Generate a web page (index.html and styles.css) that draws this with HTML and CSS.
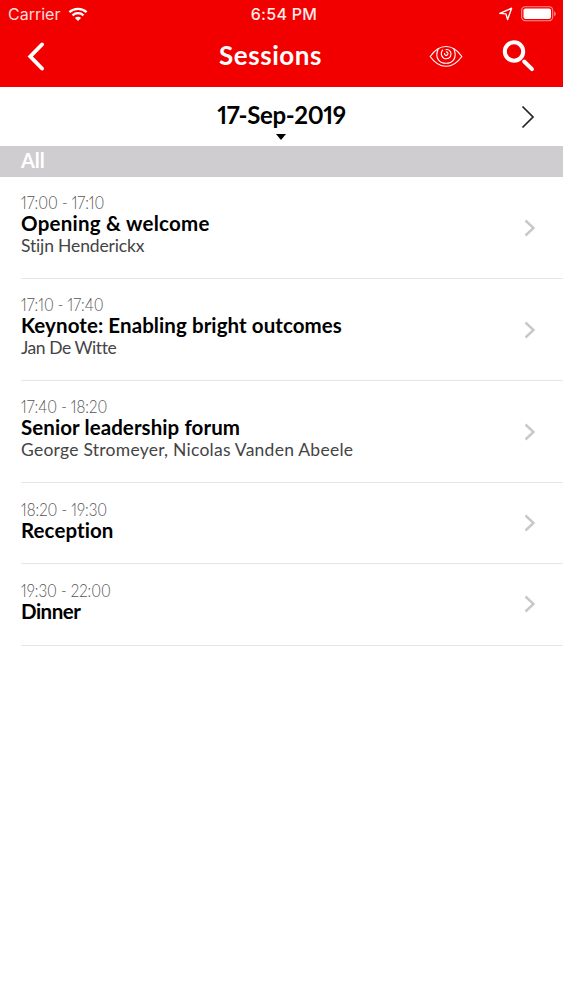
FILE: index.html
```html
<!DOCTYPE html>
<html lang="en">
<head>
  <meta charset="UTF-8" />
  <meta name="viewport" content="width=device-width, initial-scale=1.0" />
  <title>Sessions</title>
  <link rel="stylesheet" href="styles.css">
</head>
<body>
  <header class="header">
    <div class="status-bar">
      <div class="carrier">
        <span>Carrier</span>
        <svg class="wifi" width="20" height="15" viewBox="0 0 20 15" fill="none" stroke="#fff" stroke-width="2.3">
          <path d="M1.4 5.2C6.2.7 13.8.7 18.6 5.2M4.5 8.3c3.1-2.9 7.9-2.9 11 0" />
          <path d="M10 14l-3.1-3.1c1.8-1.5 4.4-1.5 6.2 0z" fill="#fff" stroke="none" />
        </svg>
      </div>
      <span class="clock">6:54 PM</span>
      <div class="indicators">
        <svg width="14" height="14" viewBox="0 0 14 14" fill="none" stroke="#fff" stroke-width="1.4" stroke-linejoin="round">
          <path d="M.8 6.4L12.6 1.2 8.6 12.6 6.9 6.9z" />
        </svg>
        <svg width="35" height="16" viewBox="0 0 35 16">
          <rect x=".7" y=".7" width="31" height="14" rx="3.6" fill="none" stroke="#ff8f8f" stroke-width="1.1" />
          <rect x="2.5" y="2.5" width="27.5" height="10.4" rx="1.8" fill="#fff" />
          <path d="M33.2 5.2c2 .8 2 4.2 0 5z" fill="#ff8f8f" />
        </svg>
      </div>
    </div>
    <div class="nav-bar">
      <svg class="back" width="20" height="30" viewBox="0 0 20 30" fill="none" stroke="#fff" stroke-width="3.9" stroke-linecap="round">
        <path d="M17 3.500L5.300 15.500 17 27.500" />
      </svg>
      <h1>Sessions</h1>
      <div class="actions">
        <svg width="34" height="24" viewBox="0 0 34 24" fill="none" stroke="#fff" stroke-width="1.1">
          <path d="M1.200 12.500C6 5.500 11 2.500 17 2.500s11 3 15.800 10C28 19.500 23 22.300 17 22.300S6 19.500 1.200 12.500z" />
          <path d="M9.200 4.700C7.200 9.500 7.300 13 9.400 15.800c3.400 4.600 11.800 4.600 15.200 0 2.100-2.800 2.200-6.300.2-11.100" />
          <path d="M13.800 5.600c-3.200 4.100-.8 9.200 3.400 9.200 3.800 0 5.900-3.600 4.400-6.800-1-2.100-3.100-2.900-5-2.300" />
          <path d="M15.500 9c-.3 2.200 2 3 3.100 1.700 1-1.300 0-2.900-1.700-2.800" />
        </svg>
        <svg width="34" height="34" viewBox="0 0 34 34" fill="none" stroke="#fff">
          <circle cx="12" cy="12.500" r="9.200" stroke-width="4" />
          <path d="M22.200 22.500l7.800 7.600" stroke-width="4" stroke-linecap="round" />
        </svg>
      </div>
    </div>
  </header>

  <div class="date-bar">
    <div class="date">
      <span>17-Sep-2019</span>
      <i class="caret"></i>
    </div>
    <svg class="next" width="14" height="24" viewBox="0 0 14 24" fill="none" stroke="#222" stroke-width="1.7">
      <path d="M1.500 1.500L12 12 1.500 22.500" />
    </svg>
  </div>

  <div class="section-title">All</div>

  <main class="sessions">
    <article class="session">
      <div>
        <div class="time">17:00 - 17:10</div>
        <h2 class="loose">Opening &amp; welcome</h2>
        <div class="speakers">Stijn Henderickx</div>
      </div>
      <svg class="chevron" viewBox="0 0 12 18"><path d="M1.500 1.500L9.500 9l-8 7.500" /></svg>
    </article>
    <article class="session">
      <div>
        <div class="time">17:10 - 17:40</div>
        <h2>Keynote: Enabling bright outcomes</h2>
        <div class="speakers tight">Jan De Witte</div>
      </div>
      <svg class="chevron" viewBox="0 0 12 18"><path d="M1.500 1.500L9.500 9l-8 7.500" /></svg>
    </article>
    <article class="session">
      <div>
        <div class="time">17:40 - 18:20</div>
        <h2>Senior leadership forum</h2>
        <div class="speakers loose">George Stromeyer, Nicolas Vanden Abeele</div>
      </div>
      <svg class="chevron" viewBox="0 0 12 18"><path d="M1.500 1.500L9.500 9l-8 7.500" /></svg>
    </article>
    <article class="session short">
      <div>
        <div class="time">18:20 - 19:30</div>
        <h2>Reception</h2>
      </div>
      <svg class="chevron" viewBox="0 0 12 18"><path d="M1.500 1.500L9.500 9l-8 7.500" /></svg>
    </article>
    <article class="session short">
      <div>
        <div class="time">19:30 - 22:00</div>
        <h2 class="tight">Dinner</h2>
      </div>
      <svg class="chevron" viewBox="0 0 12 18"><path d="M1.500 1.500L9.500 9l-8 7.500" /></svg>
    </article>
  </main>
</body>
</html>
```
FILE: styles.css
```css
* {
  box-sizing: border-box;
}
body {
  margin: 0;
  font-family: Lato, sans-serif;
  font-variant-ligatures: none;
  background: #fff;
  color: #000;
}
h1, h2 {
  margin: 0;
}
svg {
  display: block;
  flex-shrink: 0;
}
.header {
  height: 87px;
  background: #f20000;
  color: #fff;
}
.status-bar {
  display: grid;
  grid-template-columns: 1fr auto 1fr;
  align-items: center;
  height: 28px;
  padding: 0 7px 0 8px;
  font-family: Inter, sans-serif;
  font-size: 16px;
}
.carrier {
  display: flex;
  align-items: center;
  gap: 8px;
  color: #ffdcdc;
}
.clock {
  font-weight: 500;
  letter-spacing: 0.3px;
  padding-left: 4px;
  color: #ffecec;
}
.indicators {
  display: flex;
  align-items: center;
  justify-content: flex-end;
  gap: 8px;
}
.nav-bar {
  display: grid;
  grid-template-columns: 1fr auto 1fr;
  align-items: center;
  height: 56px;
  padding: 0 27px 0 25px;
}
.nav-bar h1 {
  font-size: 26px;
  line-height: 30px;
  font-weight: 700;
  letter-spacing: 0.55px;
  padding-bottom: 3px;
  margin-right: 20px;
}
.actions {
  display: flex;
  align-items: center;
  justify-content: flex-end;
  gap: 39px;
  margin-left: -20px;
}
.date-bar {
  display: grid;
  grid-template-columns: 1fr auto 1fr;
  height: 59px;
  padding: 0 28px;
}
.date {
  grid-column: 2;
  display: flex;
  flex-direction: column;
  align-items: center;
  padding-top: 13px;
  font-size: 24px;
  line-height: 30px;
  font-weight: 700;
  letter-spacing: -0.35px;
  font-feature-settings: "pnum";
}
.caret {
  margin-top: 4px;
  border: 5px solid transparent;
  border-top: 6px solid #000;
  border-bottom: 0;
}
.next {
  justify-self: end;
  align-self: center;
}
.section-title {
  height: 31px;
  padding-left: 21px;
  background: #d0cdd0;
  color: #fff;
  font-size: 20px;
  line-height: 29px;
  font-weight: 700;
}
.session {
  display: flex;
  justify-content: space-between;
  align-items: center;
  height: 102px;
  margin-left: 21px;
  padding-right: 27px;
  border-bottom: 1px solid #e6e6e6;
}
.session > div {
  padding-bottom: 7px;
}
.session.short {
  height: 81.3px;
}
.session.short > div {
  padding-bottom: 8px;
}
/* condensed light numerals */
.time {
  font-size: 18px;
  line-height: 22px;
  font-weight: 300;
  color: #555;
  font-feature-settings: "pnum";
  transform: scaleX(0.84);
  transform-origin: left;
}
.session h2 {
  font-size: 20.5px;
  line-height: 21px;
  font-weight: 700;
  letter-spacing: 0.08px;
}
.session h2.loose {
  letter-spacing: 0.25px;
}
.session h2.tight {
  letter-spacing: -0.5px;
}
.speakers {
  font-size: 17.5px;
  line-height: 23px;
  letter-spacing: -0.15px;
  color: #444;
}
.speakers.tight {
  letter-spacing: -0.45px;
}
.speakers.loose {
  letter-spacing: 0.25px;
}
.chevron {
  width: 12px;
  height: 18px;
  fill: none;
  stroke: #c8c8c8;
  stroke-width: 2.4;
}
```
